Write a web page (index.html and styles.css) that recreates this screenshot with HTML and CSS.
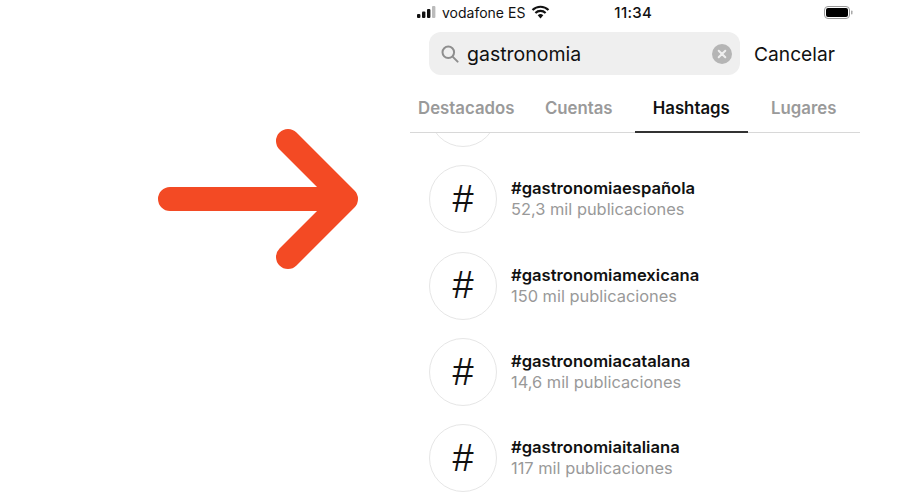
FILE: index.html
```html
<!DOCTYPE html>
<html lang="es">
<head>
    <meta charset="UTF-8">
    <meta name="viewport" content="width=device-width, initial-scale=1.0">
    <title>Hashtags</title>
    <link rel="stylesheet" href="styles.css">
</head>
<body>
    <div class="arrow-col">
        <svg class="arrow" width="200" height="142" viewBox="0 0 200 142">
            <path d="M12 71H188M130 13L188 71L130 129" fill="none" stroke="#f34a24" stroke-width="24" stroke-linecap="round" stroke-linejoin="round"/>
        </svg>
    </div>

    <div class="phone">
        <div class="status-bar">
            <svg class="signal" width="19" height="12" viewBox="0 0 19 12">
                <rect x="0" y="8" width="3.4" height="4" rx="1" fill="#111"/>
                <rect x="5" y="5.5" width="3.4" height="6.5" rx="1" fill="#111"/>
                <rect x="10" y="3" width="3.4" height="9" rx="1" fill="#111"/>
                <rect x="15" y="0" width="3.4" height="12" rx="1" fill="#bbb"/>
            </svg>
            <span class="carrier">vodafone ES</span>
            <svg class="wifi" width="19" height="14" viewBox="0 0 19 14">
                <path d="M1.5 5A11.5 11.5 0 0 1 17.5 5M4.4 8A7.4 7.4 0 0 1 14.6 8" fill="none" stroke="#111" stroke-width="2.2"/>
                <path d="M6.7 10.3A4 4 0 0 1 12.3 10.3L9.5 13.4Z" fill="#111"/>
            </svg>
            <span class="time">11:34</span>
            <svg class="battery" width="29" height="13" viewBox="0 0 29 13">
                <rect x="0.5" y="0.5" width="25" height="12" rx="3.5" fill="none" stroke="#999"/>
                <rect x="2" y="2" width="22" height="9" rx="2" fill="#000"/>
                <rect x="27" y="4.5" width="1.5" height="4" rx="0.7" fill="#aaa"/>
            </svg>
        </div>

        <div class="search-row">
            <div class="search-box">
                <svg class="search-icon" width="18" height="18" viewBox="0 0 18 18">
                    <circle cx="7.3" cy="7.3" r="5.8" fill="none" stroke="#8e8e8e" stroke-width="2"/>
                    <path d="M11.6 11.6L16.6 16.6" stroke="#8e8e8e" stroke-width="2" stroke-linecap="round"/>
                </svg>
                <span class="search-text">gastronomia</span>
                <svg class="clear-icon" width="20" height="20" viewBox="0 0 20 20">
                    <circle cx="10" cy="10" r="10" fill="#b5b5b5"/>
                    <path d="M6.7 6.7L13.3 13.3M13.3 6.7L6.7 13.3" stroke="#efefef" stroke-width="2" stroke-linecap="round"/>
                </svg>
            </div>
            <span class="cancel">Cancelar</span>
        </div>

        <div class="tabs">
            <div class="tab">Destacados</div>
            <div class="tab">Cuentas</div>
            <div class="tab active">Hashtags</div>
            <div class="tab">Lugares</div>
        </div>

        <div class="results">
            <div class="result">
                <div class="hash-circle"></div>
            </div>
            <div class="result">
                <div class="hash-circle">#</div>
                <div>
                    <div class="tag-name">#gastronomiaespañola</div>
                    <div class="tag-count">52,3 mil publicaciones</div>
                </div>
            </div>
            <div class="result">
                <div class="hash-circle">#</div>
                <div>
                    <div class="tag-name">#gastronomiamexicana</div>
                    <div class="tag-count">150 mil publicaciones</div>
                </div>
            </div>
            <div class="result">
                <div class="hash-circle">#</div>
                <div>
                    <div class="tag-name">#gastronomiacatalana</div>
                    <div class="tag-count">14,6 mil publicaciones</div>
                </div>
            </div>
            <div class="result">
                <div class="hash-circle">#</div>
                <div>
                    <div class="tag-name">#gastronomiaitaliana</div>
                    <div class="tag-count">117 mil publicaciones</div>
                </div>
            </div>
        </div>
    </div>
</body>
</html>
```

FILE: styles.css
```css
html, body {
    height: 100%;
}
body {
    font-family: Inter, "Liberation Sans", sans-serif;
    margin: 0;
    background-color: white;
    color: #111;
    display: flex;
    overflow: hidden;
}
.arrow-col {
    width: 410px;
    padding: 128px 0 0 158px;
    box-sizing: border-box;
}
.arrow {
    display: block;
}
.phone {
    width: 450px;
    height: 500px;
    overflow: hidden;
}
.status-bar {
    height: 24px;
    display: flex;
    align-items: center;
    padding-left: 7px;
    font-size: 14px;
}
.carrier {
    margin-left: 6px;
}
.wifi {
    margin-left: 6px;
}
.time {
    margin-left: 64px;
    font-size: 15px;
    font-weight: 500;
    letter-spacing: 0.3px;
}
.battery {
    margin-left: 172px;
}
.search-row {
    display: flex;
    align-items: center;
    margin-top: 8px;
    padding-left: 19px;
}
.search-box {
    width: 311px;
    height: 43px;
    box-sizing: border-box;
    background-color: #efefef;
    border-radius: 12px;
    display: flex;
    align-items: center;
    padding: 0 8px 0 12px;
}
.search-text {
    font-size: 19.5px;
    margin-left: 8px;
    flex: 1;
}
.cancel {
    font-size: 19.2px;
    margin-left: 14px;
}
.tabs {
    display: grid;
    grid-template-columns: repeat(4, 112.5px);
    height: 58px;
    border-bottom: 1px solid #d8d8d8;
    box-sizing: border-box;
}
.tab {
    font-size: 16.8px;
    font-weight: 600;
    color: #9a9a9a;
    text-align: center;
    line-height: 66px;
    height: 58px;
    box-sizing: border-box;
}
.tab.active {
    color: #111;
    border-bottom: 2px solid #333;
}
.results {
    height: 367px;
    overflow: hidden;
}
.result {
    display: flex;
    align-items: center;
    gap: 14px;
    height: 86.3px;
    padding-left: 19px;
}
.result:first-child {
    margin-top: -63px;
}
.hash-circle {
    width: 68px;
    height: 68px;
    box-sizing: border-box;
    border: 1px solid #e6e6e6;
    border-radius: 50%;
    display: flex;
    align-items: center;
    justify-content: center;
    font-family: "Liberation Sans", sans-serif;
    font-size: 38px;
    flex-shrink: 0;
}
.tag-name {
    font-size: 16.6px;
    font-weight: 600;
    line-height: 21px;
}
.tag-count {
    font-size: 16.4px;
    color: #999;
    line-height: 21px;
}
```
